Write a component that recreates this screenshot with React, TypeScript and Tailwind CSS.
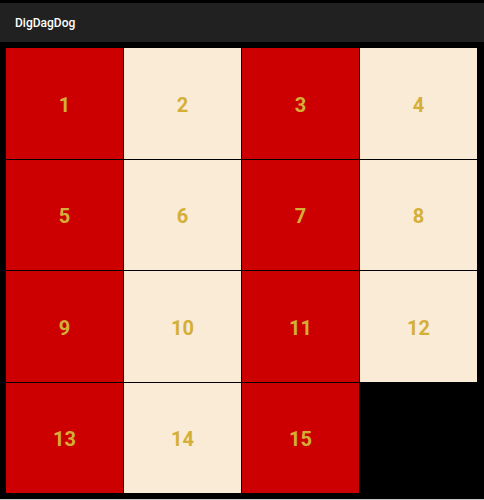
const tiles = Array.from({ length: 15 }, (_, i) => i + 1)

export default function App() {
  return (
    <div
      className="flex h-[500px] w-[484px] flex-col bg-black"
      style={{ fontFamily: 'Roboto, "Liberation Sans", sans-serif' }}
    >
      {/* Status strip */}
      <div className="h-[3px] bg-black" />

      {/* App bar */}
      <div className="flex h-[39px] items-center bg-[#212121] px-[15px]">
        <span className="text-[12px] font-medium text-white">DigDagDog</span>
      </div>

      {/* Board */}
      <div className="ml-[6px] mt-[6px] grid h-[445px] w-[471px] grid-cols-4 grid-rows-4 gap-px bg-black">
        {tiles.map((n) => (
          <div
            key={n}
            className={`flex items-center justify-center pt-[3px] text-[20px] font-bold text-[#d4af37] ${
              (n - 1) % 2 === 0 ? 'bg-[#cc0000]' : 'bg-[#faebd7]'
            }`}
          >
            {n}
          </div>
        ))}
        <div className="bg-black" />
      </div>

      <div className="flex-1" />
      <div className="h-px bg-[#c8c8c8]" />
    </div>
  )
}
